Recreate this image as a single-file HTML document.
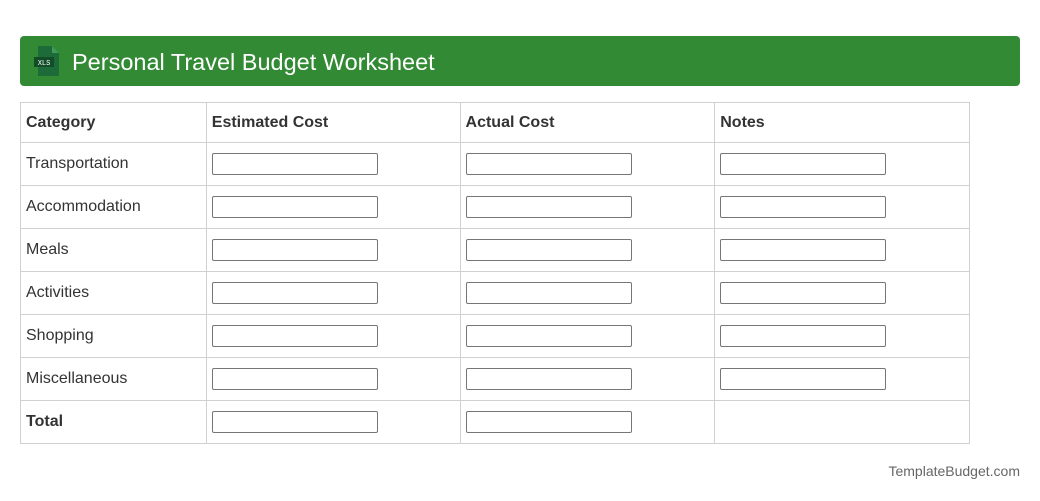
<!DOCTYPE html>
<html><head><style>
body{margin:0;width:1040px;height:501px;background:#fff;font-family:"Liberation Sans",Arial,sans-serif;color:#333;position:relative;overflow:hidden}
.hdr{position:absolute;left:20px;top:36px;width:1000px;height:50px;background:#338a35;border-radius:4px}
.hdr .t{position:absolute;left:52px;top:11px;font-size:23.5px;color:#fff;line-height:30px}
table{position:absolute;left:20px;top:102px;border-collapse:collapse;width:950px;font-size:16px}
td{border:1px solid #d0d0d0;height:43px;padding:0 5px;box-sizing:border-box}
tr:first-child td{height:40px;font-weight:bold}
td.b{font-weight:bold}
.i{display:block;width:166px;height:22px;border:1px solid #767676;border-radius:2px;box-sizing:border-box}
.f{position:absolute;right:20px;top:463px;font-size:14px;color:#666}
</style></head><body>
<div class="hdr">
<svg style="position:absolute;left:14px;top:10px" width="26" height="30" viewBox="0 0 26 30"><path d="M4 0h14l7 7v23H4z" fill="#1e6b3a"/><path d="M18 0v7h7z" fill="#3f9a5c"/><rect x="0" y="11" width="20" height="10" fill="#134d28"/><text x="10" y="19" font-size="7" fill="#fff" text-anchor="middle" font-family="Liberation Mono,monospace">XLS</text></svg>
<div class="t">Personal Travel Budget Worksheet</div></div>
<table>
<colgroup><col style="width:186px"><col style="width:254px"><col style="width:255px"><col style="width:255px"></colgroup>
<tr><td>Category</td><td>Estimated Cost</td><td>Actual Cost</td><td>Notes</td></tr>
<tr><td>Transportation</td><td><span class="i"></span></td><td><span class="i"></span></td><td><span class="i"></span></td></tr>
<tr><td>Accommodation</td><td><span class="i"></span></td><td><span class="i"></span></td><td><span class="i"></span></td></tr>
<tr><td>Meals</td><td><span class="i"></span></td><td><span class="i"></span></td><td><span class="i"></span></td></tr>
<tr><td>Activities</td><td><span class="i"></span></td><td><span class="i"></span></td><td><span class="i"></span></td></tr>
<tr><td>Shopping</td><td><span class="i"></span></td><td><span class="i"></span></td><td><span class="i"></span></td></tr>
<tr><td>Miscellaneous</td><td><span class="i"></span></td><td><span class="i"></span></td><td><span class="i"></span></td></tr>
<tr><td class="b">Total</td><td><span class="i"></span></td><td><span class="i"></span></td><td></td></tr>
</table>
<div class="f">TemplateBudget.com</div>
</body></html>
